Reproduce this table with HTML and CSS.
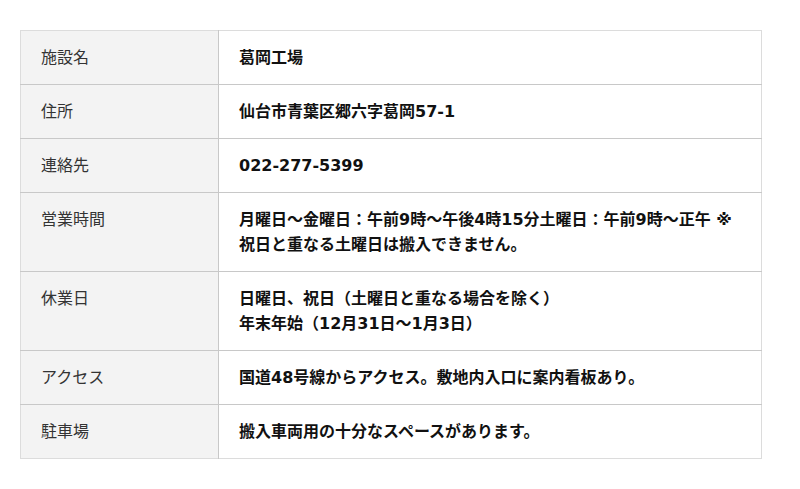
FILE: index.html
```html
<!DOCTYPE html>
<html lang="ja">
<head>
<meta charset="utf-8">
<link rel="stylesheet" href="styles.css">
</head>
<body>
<div class="wrap">
<table class="info">
<tr><th>施設名</th><td>葛岡工場</td></tr>
<tr><th>住所</th><td>仙台市青葉区郷六字葛岡57-1</td></tr>
<tr><th>連絡先</th><td>022-277-5399</td></tr>
<tr><th>営業時間</th><td>月曜日～金曜日：午前9時～午後4時15分土曜日：午前9時～正午 ※<br>祝日と重なる土曜日は搬入できません。</td></tr>
<tr><th>休業日</th><td>日曜日、祝日（土曜日と重なる場合を除く）<br>年末年始（12月31日～1月3日）</td></tr>
<tr><th>アクセス</th><td>国道48号線からアクセス。敷地内入口に案内看板あり。</td></tr>
<tr><th>駐車場</th><td>搬入車両用の十分なスペースがあります。</td></tr>
</table>
</div>
</body>
</html>
```
FILE: styles.css
```css
html, body { margin: 0; padding: 0; background: #fff; }
body { font-family: "DejaVu Sans", "Noto Sans CJK JP", sans-serif; color: #222; }
.wrap { padding: 30px 0 0 20px; }
.info {
  width: 742px;
  border-collapse: collapse;
  border: 1px solid #dcdcdc;
  font-size: 16px;
  line-height: 25px;
}
.info th, .info td {
  border-top: 1px solid #c8c8c8;
  padding: 14px 20px;
  text-align: left;
  vertical-align: top;
}
.info tr:first-child th, .info tr:first-child td { border-top: 1px solid #dcdcdc; }
.info th {
  width: 157px;
  background: #f3f3f3;
  font-weight: normal;
  color: #333;
  border-right: 1px solid #c8c8c8;
}
.info td { font-weight: bold; color: #111; }
```
